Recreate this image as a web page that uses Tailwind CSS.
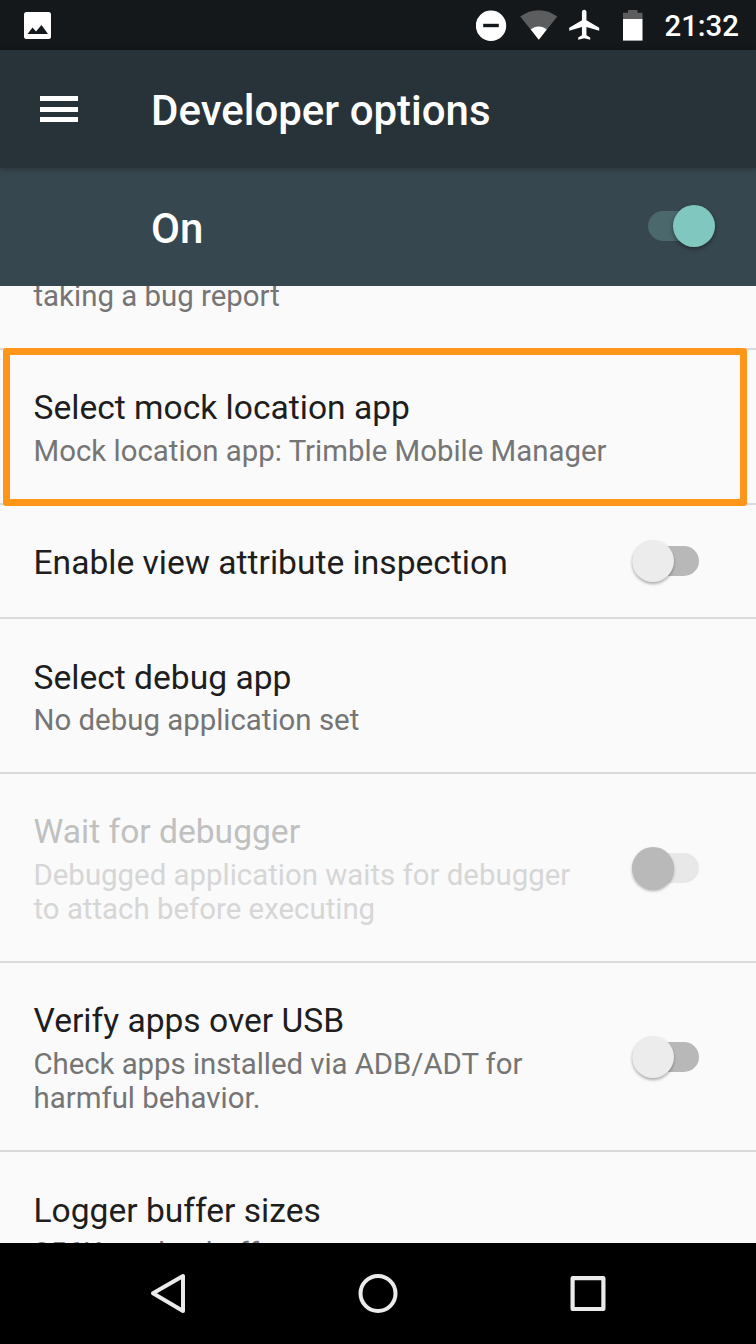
<!DOCTYPE html>
<html lang="en">
<head>
<meta charset="utf-8">
<title>Developer options</title>
<script src="https://cdn.jsdelivr.net/npm/@tailwindcss/browser@4"></script>
</head>
<body class="flex h-[1344px] w-[756px] flex-col overflow-hidden bg-[#fafafa] font-[Roboto,sans-serif]">
  <!-- Status bar -->
  <header class="flex h-[50px] shrink-0 items-center justify-between bg-[#14181b] pl-6 pr-[17px] text-white">
    <svg class="mt-px h-[27px] w-[27px]" viewBox="0 0 27 27"><rect width="27" height="27" rx="2.500" fill="#fff"/><path d="M3.500 22l5-6.500 3.500 4 5.500-6.500 6.500 9z" fill="#14181b"/></svg>
    <div class="flex items-center">
      <svg class="h-[50px] w-[188px]" viewBox="476 0 188 50">
        <circle cx="491" cy="25.700" r="15.200" fill="#fff"/><rect x="483.200" y="23.800" width="15.600" height="3.400" fill="#14181b"/>
        <path d="M538.800 39.700L520.200 16.600C531 8 546.500 8 557.300 16.600z" fill="#5b5d5f"/>
        <path d="M538.800 39.700L530.800 29.500C535 25.500 542.500 25.500 546.700 29.500z" fill="#fff"/>
        <path transform="translate(566.2 6.800) scale(1.5)" d="M22 16v-2l-8.500-5V3.500c0-.83-.67-1.500-1.500-1.500s-1.500.67-1.500 1.500V9L2 14v2l8.500-2.500V19L8 20.500V22l4-1 4 1v-1.500L13.500 19v-5.500L22 16z" fill="#fff"/>
        <path d="M623 19v-6.200h5V10h9.500v2.800h5V19z" fill="#5b5d5f"/><path d="M623 19h19.500v21.600H623z" fill="#fff"/>
      </svg>
      <span class="mt-[3px] text-[29.4px] font-medium leading-[47px]">21:32</span>
    </div>
  </header>
  <!-- Toolbar -->
  <div class="z-10 flex h-[118px] shrink-0 items-center bg-[#283339] pl-10 shadow-[0_1px_6px_rgba(0,0,0,0.3)]">
    <div class="flex w-[38px] flex-col gap-[5.5px]">
      <span class="h-[5px] bg-white"></span><span class="h-[5px] bg-white"></span><span class="h-[5px] bg-white"></span>
    </div>
    <h1 class="ml-[73px] mt-1 text-[42px] font-medium leading-[50px] text-white">Developer options</h1>
  </div>
  <!-- Main switch -->
  <div class="flex h-[117.5px] shrink-0 items-center justify-between bg-[#37474f] pl-[151px] pr-[41px]">
    <span class="mt-1 text-[42px] font-medium leading-[50px] text-white">On</span>
    <span class="mb-px flex h-[30px] w-[67px] items-center justify-end rounded-full bg-[#4b686c]"><span class="size-[42px] shrink-0 rounded-full bg-[#80c7c0] shadow-[0_2px_4px_rgba(0,0,0,0.4)]"></span></span>
  </div>
  <!-- Preferences -->
  <main class="flex min-h-0 flex-1 flex-col overflow-hidden text-[#1e1e1e]">
    <section class="flex h-[64.5px] shrink-0 flex-col border-b-2 border-[#dadada] pl-[33.5px]">
      <p class="-mt-[7px] text-[29.4px] leading-[34px] text-[#757575]">taking a bug report</p>
    </section>
    <section class="relative h-[155px] shrink-0 border-b-2 border-[#dadada] pl-[33.5px] pt-[35px]">
      <h2 class="text-[33.6px] leading-[46px]">Select mock location app</h2>
      <p class="mt-[3px] text-[29.4px] leading-[34.400px] text-[#757575]">Mock location app: Trimble Mobile Manager</p>
      <div class="absolute -top-[2px] left-[3px] z-10 h-[158px] w-[744px] rounded-[3px] border-[7px] border-[#ff9519]"></div>
    </section>
    <section class="flex h-[114px] shrink-0 items-center justify-between border-b-2 border-[#dadada] pl-[33.5px] pr-[57.5px]">
      <h2 class="mt-1 text-[33.6px] leading-[46px]">Enable view attribute inspection</h2>
      <span class="flex h-[30px] w-[67px] items-center rounded-full bg-[#b8b8b8]"><span class="size-[42px] shrink-0 rounded-full bg-[#ececec] shadow-[0_2px_3px_rgba(0,0,0,0.3)]"></span></span>
    </section>
    <section class="h-[155px] shrink-0 border-b-2 border-[#dadada] pl-[33.5px] pt-[36px]">
      <h2 class="text-[33.6px] leading-[46px]">Select debug app</h2>
      <p class="mt-[2px] text-[29.4px] leading-[34.400px] text-[#757575]">No debug application set</p>
    </section>
    <section class="flex h-[189px] shrink-0 items-center justify-between border-b-2 border-[#dadada] pl-[33.5px] pr-[57.5px]">
      <div>
        <h2 class="text-[33.6px] leading-[46px] text-[#c0c0c0]">Wait for debugger</h2>
        <p class="mt-[3px] text-[29.4px] leading-[34.400px] text-[#d6d6d6]">Debugged application waits for debugger<br>to attach before executing</p>
      </div>
      <span class="flex h-[30px] w-[67px] items-center rounded-full bg-[#e8e8e8]"><span class="size-[42px] shrink-0 rounded-full bg-[#b9b9b9] shadow-[0_2px_3px_rgba(0,0,0,0.3)]"></span></span>
    </section>
    <section class="flex h-[189px] shrink-0 items-center justify-between border-b-2 border-[#dadada] pl-[33.5px] pr-[57.5px]">
      <div>
        <h2 class="text-[33.6px] leading-[46px]">Verify apps over USB</h2>
        <p class="mt-[3px] text-[29.4px] leading-[34.400px] text-[#757575]"><span class="tracking-[-0.05px]">Check apps installed via ADB/ADT for</span><br>harmful behavior.</p>
      </div>
      <span class="flex h-[30px] w-[67px] items-center rounded-full bg-[#b8b8b8]"><span class="size-[42px] shrink-0 rounded-full bg-[#ececec] shadow-[0_2px_3px_rgba(0,0,0,0.3)]"></span></span>
    </section>
    <section class="h-[155px] shrink-0 pl-[33.5px] pt-[35.5px]">
      <h2 class="text-[33.6px] leading-[46px]">Logger buffer sizes</h2>
      <p class="mt-[2px] text-[29.4px] leading-[34.400px] text-[#757575]">256K per log buffer</p>
    </section>
  </main>
  <!-- Navigation bar -->
  <nav class="flex h-[101px] shrink-0 items-center justify-between bg-black px-[148px] pb-px">
    <svg class="size-[40px]" viewBox="0 0 40 40" fill="none" stroke="#ebebeb" stroke-width="4" stroke-linejoin="round"><path d="M35 3v35L5 20.300z"/></svg>
    <svg class="size-[40px]" viewBox="0 0 40 40" fill="none" stroke="#ebebeb" stroke-width="4"><circle cx="20" cy="20.500" r="17.500"/></svg>
    <svg class="size-[40px]" viewBox="0 0 40 40" fill="none" stroke="#ebebeb" stroke-width="4.200" stroke-linejoin="round"><path d="M4.600 5.200h30.800v30.800H4.600z"/></svg>
  </nav>
</body>
</html>
